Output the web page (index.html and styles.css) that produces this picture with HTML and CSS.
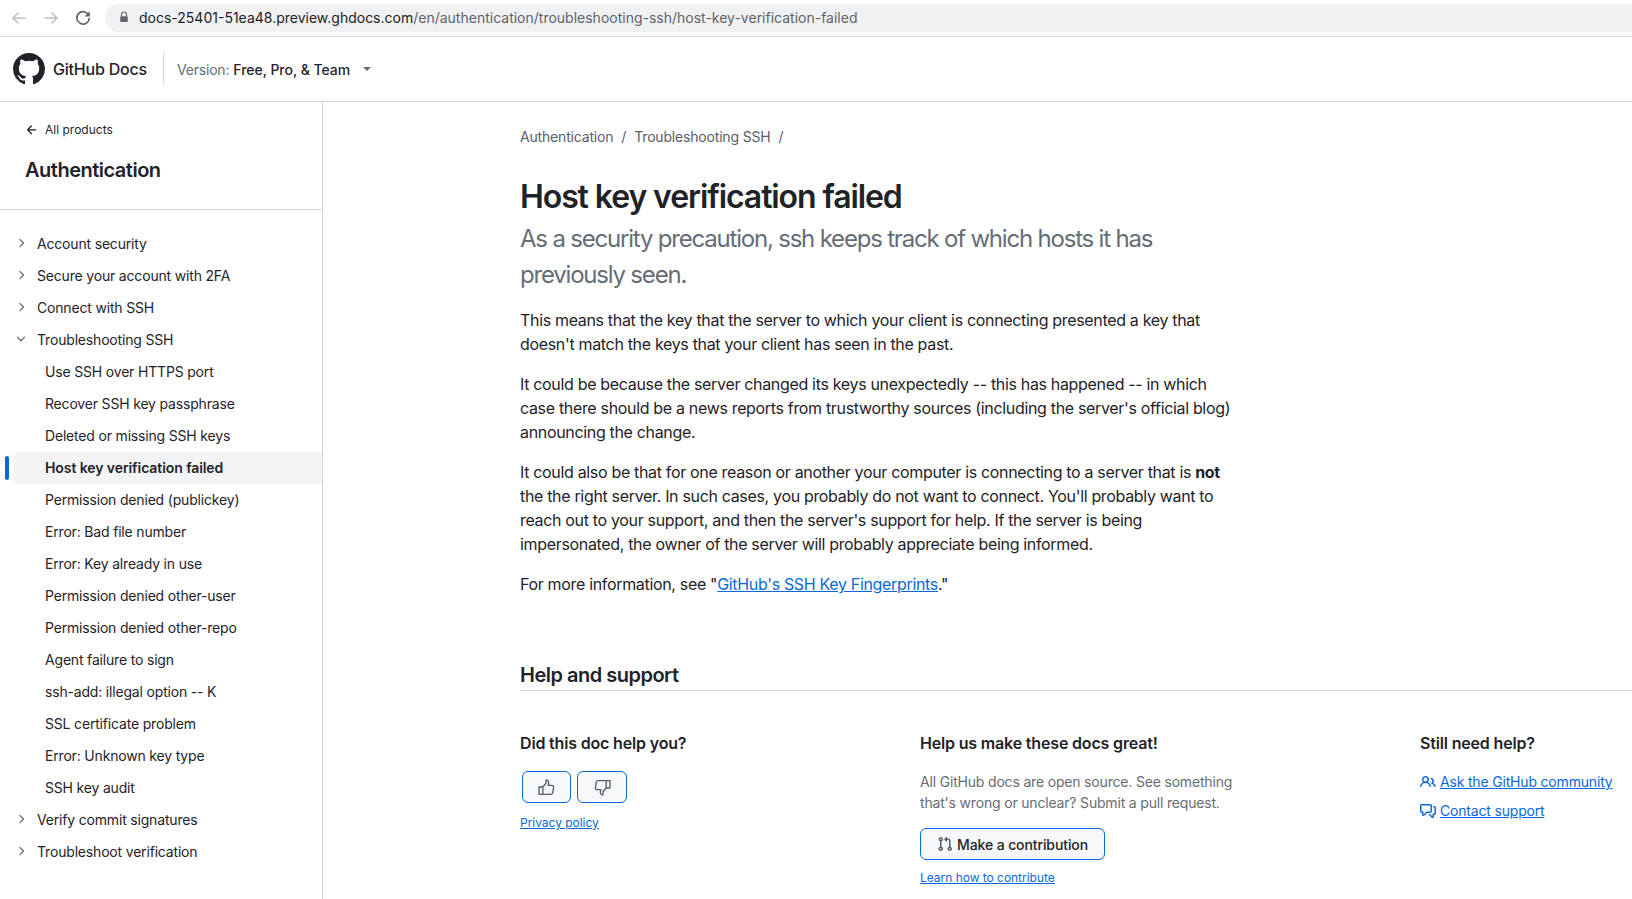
FILE: index.html
```html
<!DOCTYPE html>
<html lang="en">
<head>
    <meta charset="UTF-8">
    <title>Host key verification failed - GitHub Docs</title>
    <link rel="stylesheet" href="styles.css">
</head>
<body>
    <svg class="sprite" aria-hidden="true">
        <symbol id="i-right" viewBox="0 0 16 16"><path d="M6.22 3.22a.75.75 0 0 1 1.06 0l4.25 4.25a.75.75 0 0 1 0 1.06l-4.25 4.25a.751.751 0 0 1-1.042-.018.751.751 0 0 1-.018-1.042L9.94 8 6.22 4.28a.75.75 0 0 1 0-1.06Z"/></symbol>
        <symbol id="i-down" viewBox="0 0 16 16"><path d="M12.78 5.22a.749.749 0 0 1 0 1.06l-4.25 4.25a.749.749 0 0 1-1.06 0L3.22 6.28a.749.749 0 1 1 1.06-1.06L8 8.939l3.72-3.719a.749.749 0 0 1 1.06 0Z"/></symbol>
    </svg>

    <div class="chrome">
        <svg class="nav-btn faded" viewBox="0 0 16 16"><path d="M14.5 8H2.5M7.5 2.5 2 8l5.5 5.5" fill="none" stroke="currentColor" stroke-width="1.5"/></svg>
        <svg class="nav-btn faded" viewBox="0 0 16 16"><path d="M1.5 8h12M8.5 2.5 14 8l-5.5 5.5" fill="none" stroke="currentColor" stroke-width="1.5"/></svg>
        <svg class="nav-btn" viewBox="0 0 16 16"><path d="M13.6 5.2A6.2 6.2 0 1 0 14.2 8" fill="none" stroke="currentColor" stroke-width="1.6"/><path d="M14.8 1.2v5.2H9.6z" fill="currentColor"/></svg>
        <div class="address">
            <svg class="lock" viewBox="0 0 12 14"><path d="M3 6V4a3 3 0 0 1 6 0v2" fill="none" stroke="currentColor" stroke-width="1.4"/><rect x="1.5" y="6" width="9" height="7" rx="1" fill="currentColor"/></svg>
            <span>docs-25401-51ea48.preview.ghdocs.com<span class="url-path">/en/authentication/troubleshooting-ssh/host-key-verification-failed</span></span>
        </div>
    </div>

    <header class="site-header">
        <svg class="logo" viewBox="0 0 16 16"><path d="M8 0c4.42 0 8 3.58 8 8a8.013 8.013 0 0 1-5.45 7.59c-.4.08-.55-.17-.55-.38 0-.27.01-1.13.01-2.2 0-.75-.25-1.23-.54-1.48 1.78-.2 3.65-.88 3.65-3.95 0-.88-.31-1.59-.82-2.15.08-.2.36-1.02-.08-2.12 0 0-.67-.22-2.2.82-.64-.18-1.32-.27-2-.27-.68 0-1.36.09-2 .27-1.53-1.03-2.2-.82-2.2-.82-.44 1.1-.16 1.92-.08 2.12-.51.56-.82 1.28-.82 2.15 0 3.06 1.86 3.75 3.64 3.95-.23.2-.44.55-.51 1.07-.46.21-1.61.55-2.33-.66-.15-.24-.6-.83-1.23-.82-.67.01-.27.38.01.53.34.19.73.9.82 1.13.16.45.68 1.31 2.69.94 0 .67.01 1.3.01 1.49 0 .21-.15.45-.55.38A7.995 7.995 0 0 1 0 8c0-4.42 3.58-8 8-8Z"/></svg>
        <span class="brand">GitHub Docs</span>
        <div class="version">
            <span class="version-label">Version:</span> <span>Free, Pro, &amp; Team</span>
            <span class="caret"></span>
        </div>
    </header>

    <div class="layout">
        <aside class="sidebar">
            <div class="sidebar-top">
                <a class="all-products">
                    <svg class="icon" viewBox="0 0 16 16"><path d="M7.78 12.53a.75.75 0 0 1-1.06 0L2.47 8.28a.75.75 0 0 1 0-1.06l4.25-4.25a.751.751 0 0 1 1.042.018.751.751 0 0 1 .018 1.042L4.81 7h7.44a.75.75 0 0 1 0 1.5H4.81l2.97 2.97a.75.75 0 0 1 0 1.06Z"/></svg>
                    All products
                </a>
                <div class="sidebar-title">Authentication</div>
            </div>
            <ul class="nav">
                <li class="nav-group"><svg class="chev"><use href="#i-right"/></svg>Account security</li>
                <li class="nav-group"><svg class="chev"><use href="#i-right"/></svg>Secure your account with 2FA</li>
                <li class="nav-group"><svg class="chev"><use href="#i-right"/></svg>Connect with SSH</li>
                <li class="nav-group"><svg class="chev"><use href="#i-down"/></svg>Troubleshooting SSH</li>
                <li class="nav-child">Use SSH over HTTPS port</li>
                <li class="nav-child">Recover SSH key passphrase</li>
                <li class="nav-child">Deleted or missing SSH keys</li>
                <li class="nav-child active">Host key verification failed</li>
                <li class="nav-child">Permission denied (publickey)</li>
                <li class="nav-child">Error: Bad file number</li>
                <li class="nav-child">Error: Key already in use</li>
                <li class="nav-child">Permission denied other-user</li>
                <li class="nav-child">Permission denied other-repo</li>
                <li class="nav-child">Agent failure to sign</li>
                <li class="nav-child">ssh-add: illegal option -- K</li>
                <li class="nav-child">SSL certificate problem</li>
                <li class="nav-child">Error: Unknown key type</li>
                <li class="nav-child">SSH key audit</li>
                <li class="nav-group"><svg class="chev"><use href="#i-right"/></svg>Verify commit signatures</li>
                <li class="nav-group"><svg class="chev"><use href="#i-right"/></svg>Troubleshoot verification</li>
            </ul>
        </aside>

        <main class="content">
            <nav class="breadcrumbs">
                <a>Authentication</a><span class="sep">/</span><a>Troubleshooting SSH</a><span class="sep">/</span>
            </nav>

            <h1>Host key verification failed</h1>
            <div class="article">
                <p class="lead">As a security precaution, ssh keeps track of which hosts it has previously seen.</p>
                <p>This means that the key that the server to which your client is connecting presented a key that doesn't match the keys that your client has seen in the past.</p>
                <p>It could be because the server changed its keys unexpectedly -- this has happened -- in which case there should be a news reports from trustworthy sources (including the server's official blog) announcing the change.</p>
                <p>It could also be that for one reason or another your computer is connecting to a server that is <strong>not</strong> the the right server. In such cases, you probably do not want to connect. You'll probably want to reach out to your support, and then the server's support for help. If the server is being impersonated, the owner of the server will probably appreciate being informed.</p>
                <p>For more information, see "<a class="link">GitHub's SSH Key Fingerprints</a>."</p>
            </div>

            <section class="support">
                <h2>Help and support</h2>
                <div class="support-cols">
                    <div class="col col-feedback">
                        <h3>Did this doc help you?</h3>
                        <div class="thumbs">
                            <button class="btn thumb">
                                <svg class="thumb-icon" viewBox="0 0 16 16"><path d="M1 7.5h3.5v7H1zM4.5 7.5 7.6 4V1c1.7 0 2.7 1.2 2.4 2.8L9.6 6H13c1.1 0 1.9.9 1.7 2l-.9 5c-.2 1-.9 1.5-1.8 1.5H4.5" fill="none" stroke="currentColor" stroke-width="1.3" stroke-linejoin="round"/></svg>
                            </button>
                            <button class="btn thumb">
                                <svg class="thumb-icon" viewBox="0 0 16 16"><path d="M15 8.5h-3.5v-7H15zM11.5 8.5 8.4 12v3c-1.7 0-2.7-1.2-2.4-2.8l.4-2.2H3c-1.1 0-1.9-.9-1.7-2l.9-5c.2-1 .9-1.5 1.8-1.5h7.5" fill="none" stroke="currentColor" stroke-width="1.3" stroke-linejoin="round"/></svg>
                            </button>
                        </div>
                        <a class="link small">Privacy policy</a>
                    </div>
                    <div class="col col-contribute">
                        <h3>Help us make these docs great!</h3>
                        <p class="muted">All GitHub docs are open source. See something that's wrong or unclear? Submit a pull request.</p>
                        <button class="btn contribute">
                            <svg class="icon" viewBox="0 0 16 16"><path d="M1.5 3.25a2.25 2.25 0 1 1 3 2.122v5.256a2.251 2.251 0 1 1-1.5 0V5.372A2.25 2.25 0 0 1 1.5 3.25Zm5.677-.177L9.573.677A.25.25 0 0 1 10 .854V2.5h1A2.5 2.5 0 0 1 13.5 5v5.628a2.251 2.251 0 1 1-1.5 0V5a1 1 0 0 0-1-1h-1v1.646a.25.25 0 0 1-.427.177L7.177 3.427a.25.25 0 0 1 0-.354ZM3.75 2.5a.75.75 0 1 0 0 1.5.75.75 0 0 0 0-1.5Zm0 9.5a.75.75 0 1 0 0 1.5.75.75 0 0 0 0-1.5Zm8.25.75a.75.75 0 1 0 1.5 0 .75.75 0 0 0-1.5 0Z"/></svg>
                            Make a contribution
                        </button>
                        <a class="link small">Learn how to contribute</a>
                    </div>
                    <div class="col col-help">
                        <h3>Still need help?</h3>
                        <div class="help-link">
                            <svg class="icon" viewBox="0 0 16 16"><path d="M2 5.5a3.5 3.5 0 1 1 5.898 2.549 5.508 5.508 0 0 1 3.034 4.084.75.75 0 1 1-1.482.235 4 4 0 0 0-7.9 0 .75.75 0 0 1-1.482-.236A5.507 5.507 0 0 1 3.102 8.05 3.493 3.493 0 0 1 2 5.5ZM11 4a3.001 3.001 0 0 1 2.22 5.018 5.01 5.01 0 0 1 2.56 3.012.749.749 0 0 1-.885.954.752.752 0 0 1-.549-.514 3.507 3.507 0 0 0-2.522-2.372.75.75 0 0 1-.574-.73v-.352a.75.75 0 0 1 .416-.672A1.5 1.5 0 0 0 11 5.5.75.75 0 0 1 11 4Zm-5.5-.5a2 2 0 1 0-.001 3.999A2 2 0 0 0 5.5 3.5Z"/></svg>
                            <a class="link">Ask the GitHub community</a>
                        </div>
                        <div class="help-link">
                            <svg class="icon" viewBox="0 0 16 16"><path d="M1.75 1h8.5c.966 0 1.75.784 1.75 1.75v5.5A1.75 1.75 0 0 1 10.25 10H7.061l-2.574 2.573A1.458 1.458 0 0 1 2 11.543V10h-.25A1.75 1.75 0 0 1 0 8.25v-5.5C0 1.784.784 1 1.75 1ZM1.5 2.75v5.5c0 .138.112.25.25.25h1a.75.75 0 0 1 .75.75v2.19l2.72-2.72a.749.749 0 0 1 .53-.22h3.5a.25.25 0 0 0 .25-.25v-5.5a.25.25 0 0 0-.25-.25h-8.5a.25.25 0 0 0-.25.25Zm13 2a.25.25 0 0 0-.25-.25h-.5a.75.75 0 0 1 0-1.5h.5c.966 0 1.75.784 1.75 1.75v5.5A1.75 1.75 0 0 1 14.25 12H14v1.543a1.458 1.458 0 0 1-2.487 1.03L9.22 12.28a.749.749 0 0 1 .326-1.275.749.749 0 0 1 .734.215l2.22 2.22v-2.19a.75.75 0 0 1 .75-.75h1a.25.25 0 0 0 .25-.25Z"/></svg>
                            <a class="link">Contact support</a>
                        </div>
                    </div>
                </div>
            </section>
        </main>
    </div>
</body>
</html>
```

FILE: styles.css
```css
* {
    box-sizing: border-box;
}
html, body {
    height: 100%;
    overflow: hidden;
}
body {
    margin: 0;
    font-family: Inter, "Liberation Sans", sans-serif;
    font-size: 14px;
    letter-spacing: -0.18px;
    color: #1f2328;
    background: #fff;
}
.sprite {
    display: none;
}
svg {
    fill: currentColor;
    flex-shrink: 0;
}

/* browser bar */
.chrome {
    height: 37px;
    display: flex;
    align-items: center;
    padding-left: 11px;
    border-bottom: 1px solid #dadce0;
}
.nav-btn {
    width: 16px;
    height: 16px;
    margin-right: 16px;
    color: #5f6368;
}
.nav-btn.faded {
    color: #bcc0c4;
}
.address {
    flex: 1;
    height: 28px;
    margin-left: -2px;
    margin-right: -40px;
    padding: 0 0 2px 14px;
    display: flex;
    align-items: center;
    gap: 10px;
    background: #f0f1f3;
    border-radius: 14px;
    font-size: 14px;
    letter-spacing: 0;
    color: #202124;
}
.lock {
    width: 10px;
    height: 12px;
    color: #5f6368;
}
.url-path {
    color: #5f6368;
}

/* docs header */
.site-header {
    height: 65px;
    display: flex;
    align-items: center;
    padding-left: 13px;
    border-bottom: 1px solid #d0d7de;
}
.logo {
    width: 32px;
    height: 32px;
}
.brand {
    margin-left: 8px;
    font-size: 16px;
    font-weight: 500;
    letter-spacing: -0.2px;
    padding-right: 16px;
    height: 32px;
    line-height: 32px;
    border-right: 1px solid #d0d7de;
}
.version {
    margin-left: 13px;
    font-weight: 500;
    letter-spacing: -0.03px;
    display: flex;
    align-items: center;
    gap: 4px;
}
.version-label {
    font-weight: 400;
    letter-spacing: -0.2px;
    color: #656d76;
}
.caret {
    margin-left: 9px;
    border-top: 4px solid #656d76;
    border-left: 4px solid transparent;
    border-right: 4px solid transparent;
}

.layout {
    display: flex;
    height: calc(100% - 102px);
}

/* sidebar */
.sidebar {
    width: 323px;
    flex-shrink: 0;
    border-right: 1px solid #d0d7de;
}
.sidebar-top {
    height: 108px;
    padding: 18px 0 0 25px;
    border-bottom: 1px solid #d0d7de;
}
.all-products {
    display: flex;
    align-items: center;
    gap: 6px;
    font-size: 12px;
    letter-spacing: 0;
    line-height: 20px;
}
.all-products .icon {
    width: 14px;
    height: 14px;
}
.sidebar-title {
    margin-top: 16px;
    font-size: 20px;
    font-weight: 600;
    letter-spacing: -0.5px;
    line-height: 28px;
}
.nav {
    list-style: none;
    margin: 0;
    padding: 18px 0 0;
}
.nav li {
    height: 32px;
    line-height: 32px;
    display: flex;
    align-items: center;
}
.nav-group {
    padding-left: 13px;
}
.chev {
    width: 16px;
    height: 16px;
    margin-right: 8px;
    color: #656d76;
    position: relative;
    top: -1px;
    transform: scale(.85);
}
.nav-child {
    padding-left: 45px;
}
.nav .active {
    position: relative;
    margin-left: 13px;
    padding-left: 32px;
    font-weight: 600;
    letter-spacing: -0.08px;
    background: #f3f4f6;
    border-radius: 6px 0 0 6px;
}
.nav .active::before {
    content: "";
    position: absolute;
    left: -8px;
    top: 4px;
    width: 4px;
    height: 24px;
    background: #0969da;
    border-radius: 2px;
}

/* article */
.content {
    flex: 1;
    min-width: 0;
    padding: 23px 0 0 197px;
}
.breadcrumbs {
    display: flex;
    color: #57606a;
    line-height: 24px;
}
.sep {
    margin: 0 8px;
}
h1 {
    margin: 24px 0 0;
    font-size: 32px;
    line-height: 48px;
    font-weight: 600;
    letter-spacing: -1.1px;
}
.article {
    width: 720px;
    font-size: 16px;
    line-height: 24px;
    letter-spacing: -0.33px;
}
.article p {
    margin: 0 0 16px;
}
.article .lead {
    margin: 0 0 15px;
    width: 660px;
    font-size: 24px;
    line-height: 36px;
    letter-spacing: -1.2px;
    color: #656d76;
}
.link {
    color: #0969da;
    text-decoration: underline;
}
.small {
    font-size: 12px;
    letter-spacing: -0.03px;
}

/* help and support */
.support {
    margin-top: 64px;
}
h2 {
    margin: 0;
    font-size: 20px;
    font-weight: 600;
    letter-spacing: -0.5px;
    line-height: 30px;
    border-bottom: 1px solid #d0d7de;
}
.support-cols {
    display: flex;
    margin-top: 40px;
}
.col h3 {
    margin: 0 0 16px;
    font-size: 16px;
    font-weight: 600;
    letter-spacing: -0.17px;
    line-height: 24px;
}
.col-feedback {
    width: 400px;
}
.col-contribute {
    width: 500px;
}
.btn {
    display: flex;
    align-items: center;
    justify-content: center;
    font-family: inherit;
    font-size: 14px;
    font-weight: 500;
    letter-spacing: -0.1px;
    color: #1f2328;
    background: #f6f8fa;
    border: 1px solid #0969da;
    border-radius: 6px;
}
.thumbs {
    display: flex;
    gap: 6px;
    margin: 0 0 10px 2px;
}
.thumb {
    width: 49px;
    height: 32px;
    padding: 0;
}
.thumb + .thumb {
    width: 50px;
}
.thumb-icon {
    width: 17px;
    height: 17px;
    fill: none;
    color: #57606a;
}
.col p.muted {
    margin: 0 0 15px;
    width: 330px;
    line-height: 21px;
    color: #656d76;
}
.contribute {
    width: 185px;
    height: 32px;
    gap: 4px;
    margin-bottom: 8px;
}
.icon {
    width: 16px;
    height: 16px;
}
.contribute .icon {
    color: #57606a;
}
.help-link {
    display: flex;
    align-items: center;
    gap: 4px;
    height: 21px;
    margin-bottom: 8px;
    color: #0969da;
}
```
